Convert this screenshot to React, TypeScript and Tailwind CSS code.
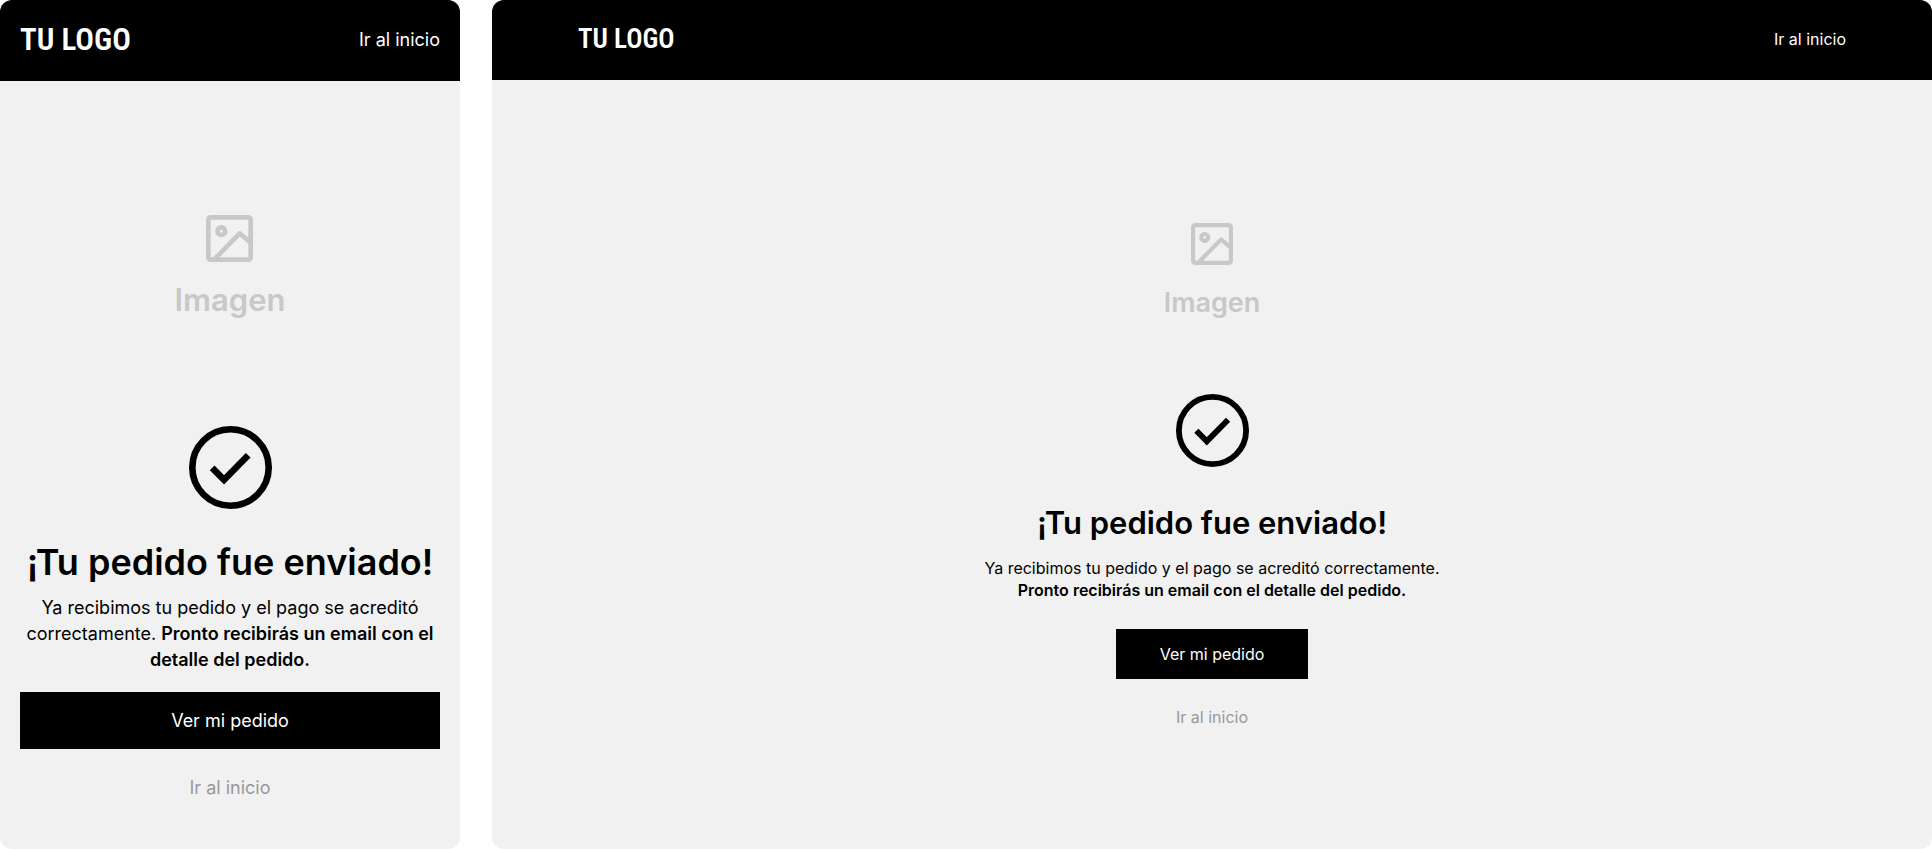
import React from 'react';
import clsx from 'clsx';

type Variant = 'mobile' | 'desktop';

interface IconProps {
  className?: string;
}

const ImageIcon: React.FC<IconProps> = ({ className }) => (
  <svg
    viewBox="0 0 141 141"
    fill="none"
    stroke="currentColor"
    strokeWidth="14"
    strokeLinejoin="round"
    aria-hidden="true"
    className={className}
  >
    <rect x="7" y="7" width="127" height="127" rx="7" />
    <circle cx="46" cy="48.5" r="11.5" />
    <path d="M22 136 101 55l34 29" />
  </svg>
);

const CheckIcon: React.FC<IconProps> = ({ className }) => (
  <svg
    viewBox="0 0 251 251"
    fill="none"
    stroke="currentColor"
    strokeWidth="20"
    aria-hidden="true"
    className={className}
  >
    <circle cx="125.5" cy="125.5" r="115.5" />
    <path d="M70 126.5l36 36 73-74" />
  </svg>
);

interface OrderSentPageProps {
  variant: Variant;
}

const OrderSentPage: React.FC<OrderSentPageProps> = ({ variant }) => {
  const isMobile = variant === 'mobile';

  return (
    <section
      className={clsx(
        'flex min-w-0 flex-col overflow-hidden rounded-xl bg-[#f1f1f1] text-black',
        isMobile ? 'text-lg' : 'text-base'
      )}
    >
      <header
        className={clsx(
          'flex items-center justify-between bg-black pb-0.5 text-white',
          isMobile ? 'h-[81px] px-5' : 'h-20 px-[86px]'
        )}
      >
        <a
          href="#"
          className={clsx(
            "font-['Roboto_Condensed','Liberation_Sans_Narrow','Liberation_Sans',sans-serif] font-semibold leading-none whitespace-nowrap",
            isMobile ? 'text-[31px]' : 'text-[27px]'
          )}
        >
          TU LOGO
        </a>
        <a href="#">Ir al inicio</a>
      </header>

      <main
        className={clsx(
          'flex flex-1 flex-col items-center text-center',
          isMobile ? 'px-5 pt-[134px]' : 'px-8 pt-[143px]'
        )}
      >
        <div className="flex flex-col items-center text-[#c8c8c8]">
          <ImageIcon className={isMobile ? 'size-[47px]' : 'size-[42px]'} />
          <span
            className={clsx(
              'font-semibold',
              isMobile
                ? 'mt-[18px] text-[31px] leading-10'
                : 'mt-5 text-[27px] leading-9'
            )}
          >
            Imagen
          </span>
        </div>

        <CheckIcon
          className={isMobile ? 'mt-[106px] size-[83px]' : 'mt-[73px] size-[73px]'}
        />

        <h1
          className={clsx(
            'font-semibold whitespace-nowrap',
            isMobile
              ? 'mt-[31px] text-[36px] leading-[44px]'
              : 'mt-9 text-[31px] leading-10'
          )}
        >
          ¡Tu pedido fue enviado!
        </h1>

        <p
          className={clsx(
            isMobile ? 'mt-[11px] leading-[26px]' : 'mt-3.5 leading-[22px]'
          )}
        >
          Ya recibimos tu pedido y el pago se acreditó correctamente.{' '}
          {!isMobile && <br />}
          <strong className="font-semibold">
            Pronto recibirás un email con el detalle del pedido.
          </strong>
        </p>

        <button
          type="button"
          className={clsx(
            'bg-black text-white',
            isMobile ? 'mt-[19px] h-[57px] w-full' : 'mt-7 h-[50px] w-48'
          )}
        >
          Ver mi pedido
        </button>

        <a
          href="#"
          className={clsx(
            'text-[#999999]',
            isMobile ? 'mt-[25px] mb-10' : 'mt-[26px] mb-10'
          )}
        >
          Ir al inicio
        </a>
      </main>
    </section>
  );
};

export default function App() {
  return (
    <div className="grid min-h-screen grid-cols-[23fr_72fr] gap-8 bg-white font-['Inter',sans-serif]">
      <OrderSentPage variant="mobile" />
      <OrderSentPage variant="desktop" />
    </div>
  );
}
